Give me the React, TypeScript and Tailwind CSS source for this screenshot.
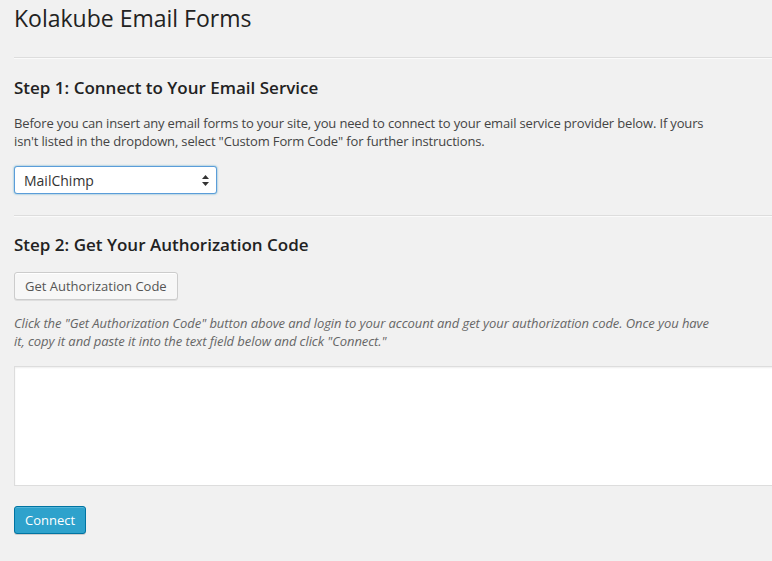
const App = () => {
  return (
    <div className="min-h-[561px] w-full overflow-hidden bg-[#f1f1f1] font-['Open_Sans',sans-serif] text-[13px] text-[#444]">
      <div className="w-[840px] pl-[14px]">
        {/* Page title */}
        <h1 className="pt-[4px] text-[23px] font-normal leading-[29px] text-[#222]">Kolakube Email Forms</h1>
        <hr className="mt-[24px] h-[2px] border-t border-b border-[#ddd] border-b-[#fafafa]" />

        {/* Step 1 */}
        <h3 className="mt-[17px] text-[17px] font-semibold leading-[24px] text-[#222]">Step 1: Connect to Your Email Service</h3>
        <p className="mt-[14px] max-w-[700px] leading-[18px] tracking-[-0.15px]">
          Before you can insert any email forms to your site, you need to connect to your email service provider below. If yours isn't listed in the dropdown, select "Custom Form Code" for further instructions.
        </p>
        <div className="relative mt-[16px] flex h-[28px] w-[203px] items-center rounded-[3px] border border-[#5b9dd9] bg-white pl-[9px] text-[14px] text-[#333] shadow-[0_0_2px_rgba(30,140,190,0.8)]">
          MailChimp
          <svg className="absolute right-[7px] top-[8px]" width="7" height="11" viewBox="0 0 7 11">
            <path d="M3.5 0 L7 4 L0 4 Z" fill="#333" />
            <path d="M0 7 L7 7 L3.5 11 Z" fill="#333" />
          </svg>
        </div>
        <hr className="mt-[21px] h-[2px] border-t border-b border-[#ddd] border-b-[#fafafa]" />

        {/* Step 2 */}
        <h3 className="mt-[16px] text-[17px] font-semibold leading-[24px] text-[#222]">Step 2: Get Your Authorization Code</h3>
        <button className="mt-[15px] block h-[28px] rounded-[3px] border border-[#ccc] bg-[#f7f7f7] px-[10px] pb-[1px] text-[13px] leading-[26px] text-[#555] shadow-[inset_0_1px_0_#fff,0_1px_0_rgba(0,0,0,0.08)]">
          Get Authorization Code
        </button>
        <p className="mt-[14px] max-w-[700px] italic leading-[18px] tracking-[-0.07px] text-[#666]">
          Click the "Get Authorization Code" button above and login to your account and get your authorization code. Once you have it, copy it and paste it into the text field below and click "Connect."
        </p>
        <textarea className="mt-[16px] block h-[120px] w-[800px] resize-none border border-[#ddd] bg-white shadow-[inset_0_1px_2px_rgba(0,0,0,0.07)] outline-none" />

        <button className="mt-[20px] block h-[28px] rounded-[3px] border border-[#0074a2] bg-[#2ea2cc] px-[10px] pb-[1px] text-[13px] leading-[26px] text-white shadow-[inset_0_1px_0_rgba(120,200,230,0.5),0_1px_0_rgba(0,0,0,0.15)]">
          Connect
        </button>
      </div>
    </div>
  );
};

export default App;
